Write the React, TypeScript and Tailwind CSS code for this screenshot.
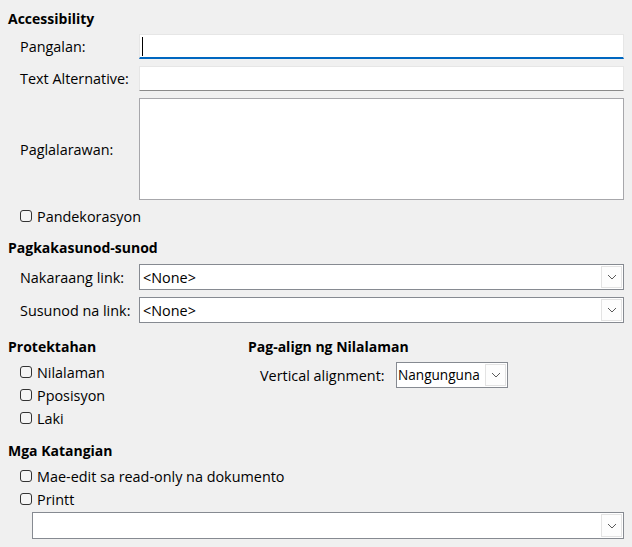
import React from "react";

const font = { fontFamily: '"Open Sans", "Noto Sans", sans-serif' };

function Chevron() {
  return (
    <svg width="10" height="6" viewBox="0 0 10 6" className="block">
      <path d="M1 1 L5 5 L9 1" fill="none" stroke="#5a5a5a" strokeWidth="1" />
    </svg>
  );
}

function Select({ value, className, valueClass = "pl-[3px]" }: { value: string; className: string; valueClass?: string }) {
  return (
    <div className={`flex items-stretch bg-white border border-[#868a91] ${className}`}>
      <div className={`flex-1 flex items-center pt-[1px] text-black overflow-hidden whitespace-nowrap ${valueClass}`}>{value}</div>
      <div className="w-[21px] shrink-0 m-[1px] ml-0 border border-[#e3e3e3] bg-[#fdfdfd] flex items-center justify-center">
        <Chevron />
      </div>
    </div>
  );
}

function Check({ label }: { label: string }) {
  return (
    <div className="h-[20px] flex items-center pl-[12px]">
      <span className="w-[12px] h-[12px] rounded-[3px] border border-[#333] bg-[#f5f5f5]" />
      <span className="ml-[5px] leading-[20px] pt-[1px]">{label}</span>
    </div>
  );
}

function Heading({ children, className = "" }: { children: React.ReactNode; className?: string }) {
  return <div className={`font-bold text-[14px] h-[20px] leading-[20px] ${className}`}>{children}</div>;
}

export default function App() {
  return (
    <div
      style={font}
      className="w-[632px] h-[547px] bg-[#f0f0f0] text-[14.4px] text-black pt-[9px] pl-[8px] pr-[8px] overflow-hidden"
    >
      <Heading>Accessibility</Heading>
      <div className="grid grid-cols-[131px_1fr] gap-y-[7px] mt-[5px]">
        <div className="pl-[12px] pt-[1px] flex items-center">Pangalan:</div>
        <div className="h-[25px] bg-white border border-[#e6e6e6] border-b-2 border-b-[#0067c0] flex items-center pl-[2px]">
          <span className="w-[1px] h-[19px] bg-black" />
        </div>
        <div className="pl-[12px] pt-[1px] flex items-center">Text Alternative:</div>
        <div className="h-[25px] bg-white border border-[#e6e6e6] border-b-[#8a8a8a]" />
        <div className="pl-[12px] pt-[1px] flex items-center">Paglalarawan:</div>
        <div className="h-[102px] bg-white border border-[#a7a7ab]" />
      </div>
      <div className="mt-[6px]">
        <Check label="Pandekorasyon" />
      </div>
      <Heading className="mt-[12px]">Pagkakasunod-sunod</Heading>
      <div className="grid grid-cols-[131px_1fr] gap-y-[7px] mt-[6px]">
        <div className="pl-[12px] pt-[1px] flex items-center">Nakaraang link:</div>
        <Select value="<None>" className="h-[26px]" />
        <div className="pl-[12px] pt-[1px] flex items-center">Susunod na link:</div>
        <Select value="<None>" className="h-[26px]" />
      </div>
      <div className="flex mt-[14px]">
        <div className="w-[240px]">
          <Heading>Protektahan</Heading>
          <div className="mt-[5px] flex flex-col gap-[3px]">
            <Check label="Nilalaman" />
            <Check label="Pposisyon" />
            <Check label="Laki" />
          </div>
        </div>
        <div>
          <Heading>Pag-align ng Nilalaman</Heading>
          <div className="mt-[5px] flex items-center pl-[12px]">
            <span className="w-[136px] pt-[1px]">Vertical alignment:</span>
            <Select value="Nangunguna" className="h-[26px] w-[112px]" valueClass="pl-[1px] text-[13.6px]" />
          </div>
        </div>
      </div>
      <Heading className="mt-[13px]">Mga Katangian</Heading>
      <div className="mt-[5px] flex flex-col gap-[3px]">
        <Check label="Mae-edit sa read-only na dokumento" />
        <Check label="Printt" />
      </div>
      <div className="mt-[3px] pl-[24px]">
        <Select value="" className="h-[27px]" />
      </div>
    </div>
  );
}
